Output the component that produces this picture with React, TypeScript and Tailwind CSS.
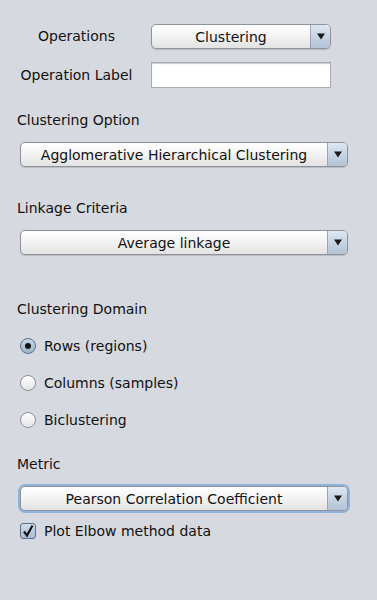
import React from "react";

const font = { fontFamily: '"DejaVu Sans", "Lucida Grande", sans-serif' };

function Combo({ label, w, focus }: { label: string; w: string; focus?: boolean }) {
  return (
    <div
      className={`${w} h-[25px] flex rounded-[5px] border border-[#8f9299] bg-gradient-to-b from-[#ffffff] via-[#f3f3f3] to-[#e2e2e2] shadow-[0_1px_1px_rgba(0,0,0,0.15)] overflow-hidden ${
        focus ? "ring-2 ring-[#8fb3dc]" : ""
      }`}
    >
      <div className="flex-1 flex items-center justify-center text-[14px] text-[#111] leading-none">{label}</div>
      <div className="w-[20px] border-l border-[#9aa4b2] bg-gradient-to-b from-[#dfe8f2] via-[#c6d4e3] to-[#b3c4d7] flex items-center justify-center">
        <svg width="8" height="7" viewBox="0 0 8 7">
          <path d="M0 0.5 H8 L4 6.5 Z" fill="#1a1a1a" />
        </svg>
      </div>
    </div>
  );
}

function Radio({ checked, label }: { checked?: boolean; label: string }) {
  return (
    <div className="flex items-center h-[20px] pl-[20px]">
      <div
        className={`w-[16px] h-[16px] rounded-full border flex items-center justify-center ${
          checked
            ? "border-[#5c6f88] bg-gradient-to-b from-[#c9d6e6] to-[#9fb3cc]"
            : "border-[#8d9098] bg-gradient-to-b from-[#ffffff] to-[#e6e6e6]"
        }`}
      >
        {checked && <div className="w-[6px] h-[6px] rounded-full bg-[#111]" />}
      </div>
      <span className="ml-[8px] text-[14px] text-[#111]">{label}</span>
    </div>
  );
}

export default function App() {
  return (
    <div className="w-[377px] h-[600px] bg-[#d6d9df] text-[#111] relative" style={font}>
      <div className="pt-[24px] grid grid-cols-[151px_180px] gap-y-[13px] items-center">
        <div className="text-center text-[14px] pl-[5px] pr-[3px]">Operations</div>
        <Combo label="Clustering" w="w-[180px]" />
        <div className="text-center text-[14px] pl-[5px] pr-[3px]">Operation Label</div>
        <div className="w-[180px] h-[26px] bg-white border border-[#a9abb0] shadow-[inset_0_1px_1px_rgba(0,0,0,0.2)]" />
      </div>

      <div className="pl-[17px] mt-[24px] text-[14px] leading-[16px]">Clustering Option</div>
      <div className="pl-[20px] mt-[14px]">
        <Combo label="Agglomerative Hierarchical Clustering" w="w-[328px]" />
      </div>

      <div className="pl-[17px] mt-[33px] text-[14px] leading-[16px]">Linkage Criteria</div>
      <div className="pl-[20px] mt-[14px]">
        <Combo label="Average linkage" w="w-[328px]" />
      </div>

      <div className="pl-[17px] mt-[46px] text-[14px] leading-[16px]">Clustering Domain</div>
      <div className="mt-[19px] flex flex-col gap-[17px]">
        <Radio checked label="Rows (regions)" />
        <Radio label="Columns (samples)" />
        <Radio label="Biclustering" />
      </div>

      <div className="pl-[17px] mt-[26px] text-[14px] leading-[16px]">Metric</div>
      <div className="pl-[20px] mt-[14px]">
        <Combo label="Pearson Correlation Coefficient" w="w-[328px]" focus />
      </div>

      <div className="flex items-center h-[20px] pl-[20px] mt-[10px]">
        <div className="w-[16px] h-[16px] rounded-[3px] border border-[#5c6f88] bg-gradient-to-b from-[#d2dded] to-[#a8bbd2] flex items-center justify-center">
          <svg width="14" height="14" viewBox="0 0 14 14">
            <path d="M3 7.5 L6 11.5 L11.5 1.5" fill="none" stroke="#111" strokeWidth="2.2" strokeLinejoin="miter" />
          </svg>
        </div>
        <span className="ml-[8px] text-[14px]">Plot Elbow method data</span>
      </div>
    </div>
  );
}
